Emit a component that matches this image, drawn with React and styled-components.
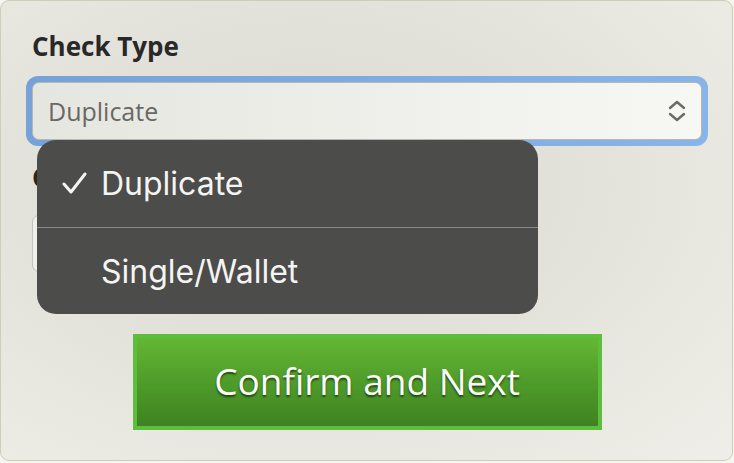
import React from "react";
import styled, { createGlobalStyle } from "styled-components";

const GlobalStyle = createGlobalStyle`
  html, body {
    margin: 0;
    padding: 0;
    background: #f6f5f0;
  }
  * {
    box-sizing: border-box;
  }
`;

const Card = styled.div`
  position: relative;
  width: 733px;
  height: 461px;
  border: 1px solid #d1ccb6;
  border-radius: 9px;
  background: radial-gradient(ellipse at 42% 40%, #dcdbd3 0%, #e3e2da 45%, #efeee8 100%);
  padding: 30px 30px 0 25px;
  font-family: "Open Sans", "Liberation Sans", sans-serif;
`;

const Label = styled.div`
  font-weight: 700;
  font-size: 26px;
  color: #282828;
  margin-left: 6px;
  margin-top: ${(p) => p.top || 0}px;
  line-height: 30px;
  white-space: nowrap;
`;

const Field = styled.div`
  margin-top: 15px;
  border-radius: 12px;
  padding: 6px;
  background: linear-gradient(90deg, #77a2d7, #87b4e9);
  width: 682px;
`;

const SelectBox = styled.div`
  display: flex;
  align-items: center;
  justify-content: space-between;
  height: 58px;
  border: 1px solid #b9b8b0;
  border-radius: 7px;
  background: linear-gradient(90deg, #e6e6e0, #f7f7f4);
  padding: 0 14px 0 15px;
  font-size: 25px;
  color: #686865;
`;

const TextBox = styled.div`
  margin: 23px 0 0 6px;
  width: 320px;
  height: 57px;
  border: 1px solid #c4c3bb;
  border-radius: 7px;
  background: linear-gradient(90deg, #efefeb, #f6f6f3);
`;

const Menu = styled.div`
  position: absolute;
  left: 36px;
  top: 139px;
  width: 501px;
  border-radius: 19px;
  background: #4c4c4a;
  overflow: hidden;
  font-family: Inter, "Liberation Sans", sans-serif;
  color: #f4f4f2;
`;

const MenuItem = styled.div`
  display: flex;
  align-items: center;
  height: ${(p) => p.h}px;
  padding-left: 25px;
  font-size: 32px;
  border-top: ${(p) => (p.divider ? "1px solid #8a8a86" : "none")};
`;

const Check = styled.span`
  display: inline-flex;
  width: 39px;
`;

const ButtonRow = styled.div`
  display: flex;
  justify-content: center;
  margin-top: 62px;
  padding-left: 6px;
`;

const Button = styled.button`
  width: 469px;
  height: 96px;
  border: 4px solid #5dbd3d;
  background: linear-gradient(180deg, #64b734 0%, #4f9c2a 50%, #3e8221 100%);
  color: #fbfbf8;
  font-family: "Open Sans", "Liberation Sans", sans-serif;
  font-size: 37px;
  line-height: 1;
  padding: 0 0 4px;
  text-shadow: 0 2px 2px rgba(0, 0, 0, 0.55);
  cursor: pointer;
`;

const Chevrons = () => (
  <svg width="20" height="24" viewBox="0 0 20 24" fill="none" stroke="#6a6a68" strokeWidth="2.4" strokeLinecap="round" strokeLinejoin="round">
    <polyline points="3,9 10,3 17,9" />
    <polyline points="3,15 10,21 17,15" />
  </svg>
);

const CheckIcon = () => (
  <svg width="26" height="26" viewBox="0 0 26 26" fill="none" stroke="#f4f4f2" strokeWidth="3" strokeLinecap="round" strokeLinejoin="round">
    <polyline points="2,13 9,21 23,3" />
  </svg>
);

export default function App() {
  return (
    <>
      <GlobalStyle />
      <Card>
        <Label>Check Type</Label>
        <Field>
          <SelectBox>
            <span>Duplicate</span>
            <Chevrons />
          </SelectBox>
        </Field>
        <Label top={16}>Check Count</Label>
        <TextBox />
        <ButtonRow>
          <Button>Confirm and Next</Button>
        </ButtonRow>
        <Menu>
          <MenuItem h={87}>
            <Check>
              <CheckIcon />
            </Check>
            Duplicate
          </MenuItem>
          <MenuItem h={87} divider>
            <Check />
            Single/Wallet
          </MenuItem>
        </Menu>
      </Card>
    </>
  );
}
